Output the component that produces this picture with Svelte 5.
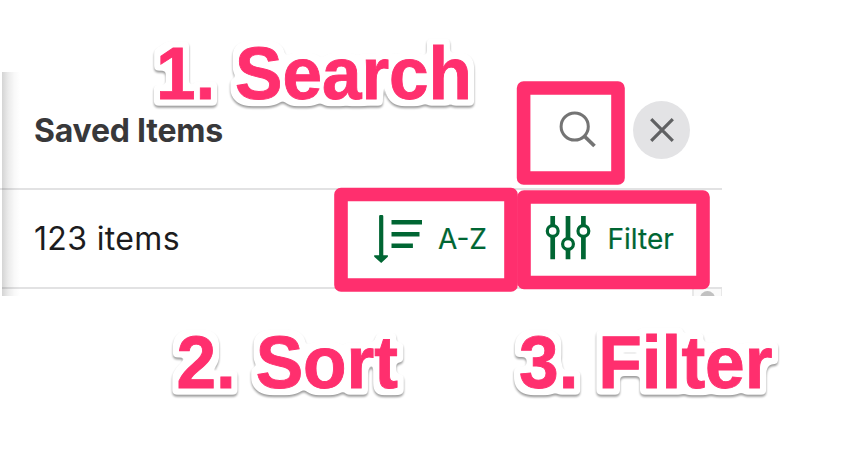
<script>
  const frames = [
    { x: 523.6, y: 88, w: 94.4, h: 90 },
    { x: 341, y: 194.5, w: 170, h: 90.5 },
    { x: 524, y: 197, w: 179, h: 85.5 }
  ];
  const labels = [
    { text: '1. Search', x: 156, y: 98.8, w: 316 },
    { text: '2. Sort', x: 176.5, y: 387.6, w: 221.5 },
    { text: '3. Filter', x: 519, y: 387.6, w: 253.5 }
  ];
</script>

<main>
  <section class="panel">
    <header>
      <h1>Saved Items</h1>
      <button class="search" aria-label="Search">
        <svg width="40" height="40" viewBox="0 0 40 40" fill="none" stroke="#747474">
          <circle cx="15.700" cy="16.500" r="13.600" stroke-width="3" />
          <path d="M25.200 26 35.500 36" stroke-width="3.800" />
        </svg>
      </button>
      <button class="close" aria-label="Close">
        <svg width="24" height="24" viewBox="0 0 24 24" stroke="#606163" stroke-width="3.2">
          <path d="M1.2 1.2 22.8 22.8M22.8 1.2 1.2 22.8" />
        </svg>
      </button>
    </header>
    <div class="tools">
      <span class="count">123 items</span>
      <button class="sort">
        <svg width="50" height="50" viewBox="0 0 50 50" fill="#006633">
          <path d="M5.100 2.300q0-1.200 1.200-1.200h1.800q1.200 0 1.200 1.200v39h4.600v1.400L7.200 49 .2 42.700v-1.400h4.900z" />
          <path d="M17.500 6h30.500v4.500H17.500zM17.500 18h28v4.400H17.500zM17.500 29.600h21.400V34H17.500z" />
        </svg>
        <span>A-Z</span>
      </button>
      <button class="filter">
        <svg width="46" height="46" viewBox="0 0 46 46" fill="none" stroke="#006633">
          <path d="M7.700 0V9.200M7.700 20V43.300M23 0V22M23 33V43.300M38.400 0V9.200M38.400 20V43.300" stroke-width="4.700" />
          <g fill="#fff" stroke-width="3.200">
            <circle cx="7.700" cy="15" r="5.400" />
            <circle cx="23" cy="28" r="5.400" />
            <circle cx="38.400" cy="15" r="5.400" />
          </g>
        </svg>
        <span>Filter</span>
      </button>
    </div>
    <div class="rest"><div class="track"><i></i></div></div>
  </section>

  <svg class="notes" width="844" height="466" viewBox="0 0 844 466">
    <defs>
      <filter id="sticker" x="-15%" y="-20%" width="130%" height="140%" color-interpolation-filters="sRGB">
        <feMorphology in="SourceAlpha" operator="dilate" radius="6" />
        <feGaussianBlur stdDeviation="2" />
        <feComponentTransfer result="edge">
          <feFuncA type="linear" slope="6" intercept="-2.300" />
        </feComponentTransfer>
        <feFlood flood-color="#fff" />
        <feComposite in2="edge" operator="in" result="halo" />
        <feGaussianBlur in="edge" stdDeviation="1.200" />
        <feOffset dy="1.700" />
        <feComponentTransfer result="shade">
          <feFuncA type="linear" slope=".4" />
        </feComponentTransfer>
        <feMerge>
          <feMergeNode in="shade" />
          <feMergeNode in="halo" />
          <feMergeNode in="SourceGraphic" />
        </feMerge>
      </filter>
    </defs>
    {#each frames as f}
      <rect x={f.x} y={f.y} width={f.w} height={f.h} />
    {/each}
    {#each labels as l}
      <text x={l.x} y={l.y} textLength={l.w} lengthAdjust="spacingAndGlyphs" filter="url(#sticker)">{l.text}</text>
    {/each}
  </svg>
</main>

<style>
  :global(body) { margin: 0; background: #fff; }
  main {
    position: relative;
    box-sizing: border-box;
    width: 844px;
    height: 466px;
    padding-top: 72px;
    overflow: hidden;
    background: #fff;
    font-family: Inter, 'Liberation Sans', sans-serif;
  }
  .panel { position: relative; width: 722px; height: 224px; overflow: hidden; }
  .panel::before {
    content: '';
    position: absolute;
    left: 2px;
    top: 0;
    width: 18px;
    height: 224px;
    background: linear-gradient(90deg, rgba(0,0,0,.17), rgba(0,0,0,.08) 35%, rgba(0,0,0,.025) 70%, transparent);
  }
  header, .tools { display: flex; align-items: center; box-sizing: border-box; padding-left: 34px; }
  header { height: 118px; border-bottom: 2px solid #e2e2e3; }
  .tools { height: 99px; margin-left: 2px; padding-left: 32px; border-bottom: 2px solid #e2e2e3; }
  button { display: flex; align-items: center; border: 0; padding: 0; background: none; font: inherit; color: #006633; }
  h1 { margin: 0; padding-top: 2px; width: 525px; font-size: 32px; line-height: 40px; font-weight: 700; color: #38383a; letter-spacing: -.22px; white-space: nowrap; }
  .search { width: 74px; height: 40px; }
  .close { width: 57px; height: 58px; border-radius: 50%; background: #e3e3e5; justify-content: center; }
  .count { width: 340px; font-size: 32px; line-height: 40px; color: #1c1c1e; letter-spacing: .35px; }
  .sort { width: 171px; }
  .sort span { margin-left: 14px; }
  .filter span { margin-left: 16.500px; }
  .sort span, .filter span { font-size: 28px; line-height: 36px; white-space: nowrap; -webkit-text-stroke: .2px #006633; }
  .rest { height: 7px; display: flex; justify-content: flex-end; }
  .track { box-sizing: border-box; width: 30px; height: 7px; overflow: hidden; border-left: 2px solid #e8e8e8; border-right: 1px solid #e8e8e8; background: #fafafa; }
  .track i { display: block; width: 15px; height: 24px; margin: 2px 0 0 6px; border-radius: 8px; background: #c1c1c1; }
  .notes { position: absolute; left: 0; top: 0; pointer-events: none; }
  rect { fill: none; stroke: #ff2f6e; stroke-width: 13.600px; stroke-linejoin: round; }
  text {
    font: bold 73.500px 'Liberation Sans', Arial, sans-serif;
    fill: #ff2f6e;
    stroke: #ff2f6e;
    stroke-width: .9px;
  }
</style>
